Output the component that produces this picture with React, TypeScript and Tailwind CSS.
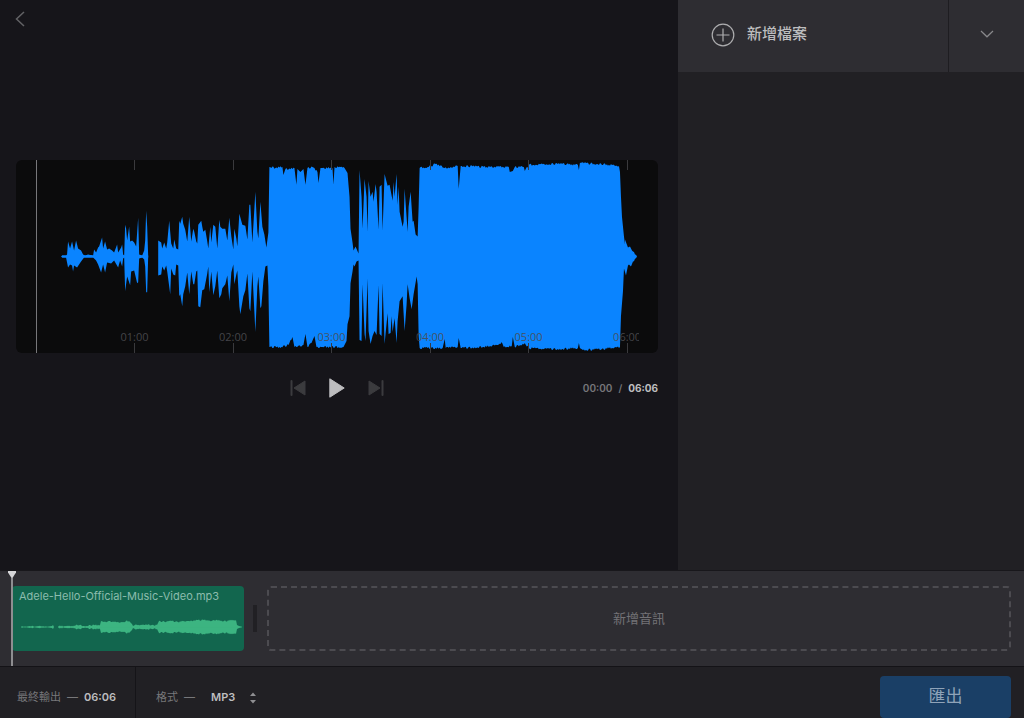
import { FC, useState } from "react";

// [seconds-scaled x, amplitude], drawn outward from the center line
type Point = [number, number];

const introTop: Point[] = [
  [25,0],[26,1],[30,1],[31,2],[32,15],[34,8],[36,15],[38,6],[40,16],[42,8],[45,6],[47,2],[49,1],[52,2],[57,1],
  [58,7],[60,4],[62,9],[63,10],[66,19],[67,8],[69,15],[71,7],[73,8],[76,6],[78,4],[81,12],[82,4],[85,9],[86,12],
  [87,2],[88,1],[89,32],[90,28],[91,16],[93,30],[94,15],[96,16],[98,14],[100,10],[102,39],[103,2],[106,1],
  [108,6],[109,16],[110,46],[111,30],[112,0],
];

const introBottom: Point[] = [
  [25,0],[26,1],[30,1],[32,11],[34,8],[36,9],[37,15],[38,9],[41,11],[45,5],[48,1],[57,1],[60,4],[62,8],[65,16],
  [67,8],[69,16],[71,6],[75,7],[78,4],[82,11],[84,4],[86,10],[87,2],[88,1],[89,35],[91,20],[94,29],[95,15],
  [98,14],[101,27],[102,26],[103,2],[106,1],[108,3],[109,10],[110,36],[111,36],[112,0],
];

const songTop: Point[] = [
  [122,0],[122,16],[125,14],[126,8],[128,14],[130,8],[131,14],[133,36],[135,13],[137,8],[138,17],[140,8],[142,7],
  [143,36],[144,33],[146,40],[147,33],[149,27],[151,15],[153,40],[155,15],[157,28],[158,25],[160,15],[161,13],
  [162,32],[165,36],[166,30],[167,25],[169,27],[171,15],[172,8],[174,30],[175,14],[177,32],[179,30],[181,8],
  [183,37],[184,30],[186,28],[189,28],[191,16],[193,39],[195,20],[197,7],[198,28],[200,18],[201,10],[203,43],
  [206,32],[209,31],[211,17],[213,52],[214,52],[216,14],[219,65],[221,25],[222,18],[224,55],[226,30],[228,22],
  [230,9],[232,24],[233,90],[239,89],[246,90],[247,82],[249,88],[258,89],[260,72],[261,88],[264,85],[267,88],
  [269,72],[271,89],[276,90],[281,85],[282,74],[284,89],[296,89],[297,72],[298,90],[308,89],[311,84],[313,60],
  [314,28],[316,14],[317,6],[319,10],[322,3],[323,87],[325,60],[326,28],[328,78],[330,60],[331,25],[332,76],
  [334,60],[336,65],[337,55],[339,73],[340,65],[342,27],[343,70],[345,72],[346,26],[348,83],[351,71],[353,72],
  [356,56],[357,75],[358,60],[360,83],[361,52],[362,70],[363,45],[366,30],[367,35],[368,68],[371,25],[372,50],
  [374,65],[376,35],[377,36],[379,22],[381,20],[382,50],[383,89],[392,90],[399,93],[408,89],[421,91],[422,68],
  [424,91],[450,90],[472,90],[473,85],[476,86],[478,90],[487,90],[488,86],[492,92],[504,93],[530,93],[541,92],
  [542,87],[543,94],[560,93],[575,92],[582,91],[583,85],[584,60],[585,40],[587,20],[588,12],[588,17],[591,9],
  [593,10],[595,6],[600,0],
];

const songBottom: Point[] = [
  [122,0],[122,19],[125,18],[126,10],[128,14],[130,9],[131,15],[134,38],[135,12],[137,18],[139,19],[140,8],[142,9],
  [143,40],[144,38],[146,50],[147,38],[149,30],[151,16],[153,38],[155,15],[157,28],[158,28],[160,15],[161,14],
  [162,50],[164,51],[166,34],[168,33],[171,17],[172,10],[173,36],[175,15],[177,39],[179,30],[181,14],[183,42],
  [185,38],[186,32],[189,28],[191,19],[193,45],[195,16],[197,8],[198,28],[200,18],[201,14],[203,50],[204,58],
  [207,40],[209,34],[211,17],[213,52],[214,55],[216,15],[219,76],[221,30],[222,20],[224,52],[225,50],[227,25],
  [229,10],[231,9],[232,30],[233,91],[245,91],[252,89],[256,81],[258,91],[267,89],[269,78],[271,91],[275,87],
  [278,80],[280,91],[307,91],[310,85],[311,68],[313,60],[314,27],[316,15],[317,8],[318,10],[320,5],[322,4],
  [323,84],[325,85],[326,28],[328,78],[329,85],[331,22],[332,75],[334,88],[336,80],[338,75],[340,79],[342,29],
  [343,78],[345,80],[346,27],[348,88],[351,57],[352,78],[354,77],[355,60],[356,76],[358,62],[360,87],[361,65],
  [363,45],[366,40],[368,75],[370,48],[371,28],[373,42],[375,53],[377,38],[380,20],[381,28],[382,80],[383,92],
  [406,92],[408,83],[409,92],[421,91],[422,82],[424,92],[446,91],[460,89],[465,86],[467,91],[475,90],[476,81],
  [478,91],[488,87],[492,92],[504,93],[526,93],[541,92],[542,87],[543,92],[549,94],[565,93],[583,91],[584,60],
  [586,35],[587,12],[589,19],[591,9],[592,8],[594,10],[596,5],[600,0],
];

const clipEnvelope: Point[] = [
  [9,0],[10,1],[14,0],[18,1],[22,0],[27,1],[35,0],[40,1],[41,2],[42,0],[46,0],[47,1],[58,1],[68,2],[72,1],[82,2],
  [88,2],[89,6],[92,5],[97,6],[104,5],[110,5],[117,6],[120,3],[121,1],[123,2],[132,2],[140,2],[145,2],[147,6],
  [154,5],[160,6],[166,5],[172,6],[180,6],[186,7],[192,7],[198,6],[204,7],[212,6],[224,7],[225,2],[227,1],[230,0],
];

// Long flat stretches get a small ripple so they do not look like boxes
const addRipple = (points: Point[], size: number): Point[] => {
  const result: Point[] = [];
  points.forEach(([x, amp], i) => {
    result.push([x, amp]);
    const next = points[i + 1];
    if (!next || next[0] - x < 4 || amp === 0) return;
    for (let step = x + 1; step < next[0]; step += 1) {
      const base = amp + ((next[1] - amp) * (step - x)) / (next[0] - x);
      result.push([step, base + size * Math.sin(step * step * 1.7)]);
    }
  });
  return result;
};

const toPath = (top: Point[], bottom: Point[], center: number, ripple: number) => {
  const upper = addRipple(top, ripple).map(([x, amp]) => `${x} ${center - amp}`);
  const lower = addRipple(bottom, ripple).reverse().map(([x, amp]) => `${x} ${center + amp}`);
  return `M${upper.join("L")}L${lower.join("L")}Z`;
};

const marks = [
  { label: "01:00", seconds: 60 },
  { label: "02:00", seconds: 120 },
  { label: "03:00", seconds: 180 },
  { label: "04:00", seconds: 240 },
  { label: "05:00", seconds: 300 },
  { label: "06:00", seconds: 360 },
];
const duration = 366;

const Waveform: FC = () => (
  <div className="h-[193px] rounded-md bg-[#0b0b0c] pl-5 pr-[21px]">
    <div className="relative h-full">
      <svg className="block h-full w-full" viewBox="0 0 600 194" preserveAspectRatio="none" aria-hidden="true">
        <path
          fill="#0a84ff"
          d={toPath(introTop, introBottom, 97, 0) + toPath(songTop, songBottom, 97, 1)}
        />
        <path stroke="#0a84ff" strokeWidth="2" d="M26 97H112" />
      </svg>
      <div className="absolute inset-y-0 left-0 w-px bg-[#77777a]" />
      <div className="absolute inset-y-0 left-0 -right-[2px] overflow-hidden">
        <div className="relative mr-[2px] h-full">
          {marks.map(({ label, seconds }) => (
            <div
              key={label}
              className="absolute inset-y-0 flex w-10 -translate-x-1/2 flex-col items-center font-['Open_Sans',sans-serif] text-[11px] leading-3 text-[#4c4c50]/90"
              style={{ left: `${(seconds / duration) * 100}%` }}
            >
              <span className="h-[10px] w-px bg-[#3a3a3d]" />
              <span className="mt-auto">{label}</span>
              <span className="h-[10px] w-px bg-[#3a3a3d]" />
            </div>
          ))}
        </div>
      </div>
    </div>
  </div>
);

const PlayerControls: FC<{ playing: boolean, onToggle: () => void }> = ({ playing, onToggle }) => (
  <div className="mt-[15px] grid h-10 grid-cols-[1fr_auto_1fr] items-center">
    <div />
    <div className="flex items-center">
      <button type="button" aria-label="Previous" className="flex w-[39px] justify-center">
        <svg width="16" height="16" viewBox="0 0 16 16" fill="#3b3b3e" stroke="#3b3b3e" strokeLinejoin="round">
          <path d="M1.5 1V15" strokeWidth="2" strokeLinecap="round" />
          <path d="M15 1V15L4 8Z" />
        </svg>
      </button>
      <button type="button" aria-label="Play" aria-pressed={playing} className="flex w-[39px] justify-center" onClick={onToggle}>
        <svg width="16" height="20" viewBox="0 0 16 20" fill="#bdbdbf" stroke="#bdbdbf" strokeLinejoin="round">
          <path d="M0.8 0.8V19.2L15.2 10Z" />
        </svg>
      </button>
      <button type="button" aria-label="Next" className="flex w-[39px] justify-center">
        <svg width="16" height="16" viewBox="0 0 16 16" fill="#3b3b3e" stroke="#3b3b3e" strokeLinejoin="round">
          <path d="M14.5 1V15" strokeWidth="2" strokeLinecap="round" />
          <path d="M1 1V15L12 8Z" />
        </svg>
      </button>
    </div>
    <div className="flex justify-end gap-[6px] text-[10px] leading-4 font-semibold text-[#77777a]">
      <span>00:00</span>
      <span>/</span>
      <span className="font-bold text-[#bdbdbf]">06:06</span>
    </div>
  </div>
);

const FilePanel: FC = () => (
  <aside className="w-[346px] shrink-0 bg-[#212024]">
    <div className="flex h-[72px] bg-[#2e2d32]">
      <button type="button" className="flex flex-1 items-center gap-3 pb-[3px] pl-[33px] text-[15px] font-medium text-[#bdbdbf]">
        <svg width="24" height="24" viewBox="0 0 24 24" fill="none" stroke="#adadaf" strokeWidth="1.2">
          <circle cx="12" cy="12" r="10.8" />
          <path d="M12 5.5V18.5M5.5 12H18.5" />
        </svg>
        新增檔案
      </button>
      <button
        type="button"
        aria-label="More"
        className="flex w-[76px] items-center justify-center border-l border-[#1e1d21] pb-1"
      >
        <svg width="14" height="8" viewBox="0 0 14 8" fill="none" stroke="#89898c" strokeWidth="1.2">
          <path d="M1 1L7 6.8L13 1" />
        </svg>
      </button>
    </div>
  </aside>
);

const Timeline: FC = () => (
  <section className="relative flex h-[96px] items-start border-t border-[#18171b] bg-[#2e2d32] pt-[15px] pr-[13px] pl-3">
    <div className="h-[65px] w-[232px] shrink-0 rounded-sm bg-[#12664e]">
      <p className="truncate pt-[2px] pl-[7px] text-[11px] leading-4 text-[#8cbcad]">
        Adele-Hello-Official-Music-Video.mp3
      </p>
      <svg className="mt-[15px] block h-4 w-full" viewBox="0 0 232 16" preserveAspectRatio="none" aria-hidden="true">
        <path fill="#3cb481" d={toPath(clipEnvelope, clipEnvelope, 8, 0.7)} />
        <path stroke="#3cb481" strokeOpacity="0.6" d="M10 8H40M46 8H230" />
      </svg>
    </div>
    <div className="mt-[19px] ml-[9px] h-[27px] w-1 shrink-0 bg-[#212024]" />
    <button
      type="button"
      className="ml-[10px] h-[65px] flex-1 rounded border-2 border-dashed border-[#4c4b50] text-[13px] text-[#737276]"
    >
      新增音訊
    </button>
    <div className="absolute inset-y-0 left-[11px] w-[2px] bg-[#8e8e91]" />
    <svg className="absolute top-0 left-2" width="8" height="7" viewBox="0 0 8 7" fill="#d6d6d8">
      <path d="M0 0H8V1.5L4.8 6.5H3.2L0 1.5Z" />
    </svg>
  </section>
);

const Footer: FC = () => {
  const [format, setFormat] = useState<string>("MP3");

  return (
    <footer className="flex h-[52px] border-t border-[#141317] bg-[#212024] pr-[13px] text-[11px] text-[#77777a]">
      <div className="flex w-[136px] items-center gap-[6px] border-r border-[#151418] pt-[10px] pl-[17px]">
        <span>最終輸出</span>
        <span>—</span>
        <span className="font-semibold text-[#bdbdbf]">06:06</span>
      </div>
      <div className="flex flex-1 items-center pt-[10px] pl-5">
        <label htmlFor="format" className="flex gap-[6px]">
          <span>格式</span>
          <span>—</span>
        </label>
        <div className="relative ml-4 flex items-center">
          <select
            id="format"
            className="w-[46px] appearance-none bg-transparent font-semibold text-[#bdbdbf] outline-none"
            value={format}
            onChange={(e) => setFormat(e.target.value)}
          >
            <option>MP3</option>
            <option>WAV</option>
            <option>M4A</option>
          </select>
          <svg className="pointer-events-none absolute right-0" width="8" height="12" viewBox="0 0 8 12" fill="#8e8e91">
            <path d="M4 0.5L7 4H1ZM4 11.5L7 8H1Z" />
          </svg>
        </div>
      </div>
      <button
        type="button"
        className="mt-[9px] h-[42px] w-[131px] rounded bg-[#1a3f66] text-[17px] text-[#8fa3b8]"
      >
        匯出
      </button>
    </footer>
  );
};

export default function App() {
  const [playing, setPlaying] = useState<boolean>(false);

  return (
    <div className="flex min-h-screen flex-col bg-[#16151a] font-[Inter,'Noto_Sans_CJK_TC',sans-serif] select-none">
      <div className="flex flex-1">
        <main className="flex min-w-0 flex-1 flex-col">
          <div className="flex h-[38px] items-center pl-[14px]">
            <button type="button" aria-label="Back">
              <svg width="12" height="16" viewBox="0 0 12 16" fill="none" stroke="#626265" strokeWidth="1.5">
                <path d="M10 1L2.5 8L10 15" />
              </svg>
            </button>
          </div>
          <div className="flex flex-1 flex-col justify-center pr-5 pb-10 pl-4">
            <Waveform />
            <PlayerControls playing={playing} onToggle={() => setPlaying(!playing)} />
          </div>
        </main>
        <FilePanel />
      </div>
      <Timeline />
      <Footer />
    </div>
  );
}
